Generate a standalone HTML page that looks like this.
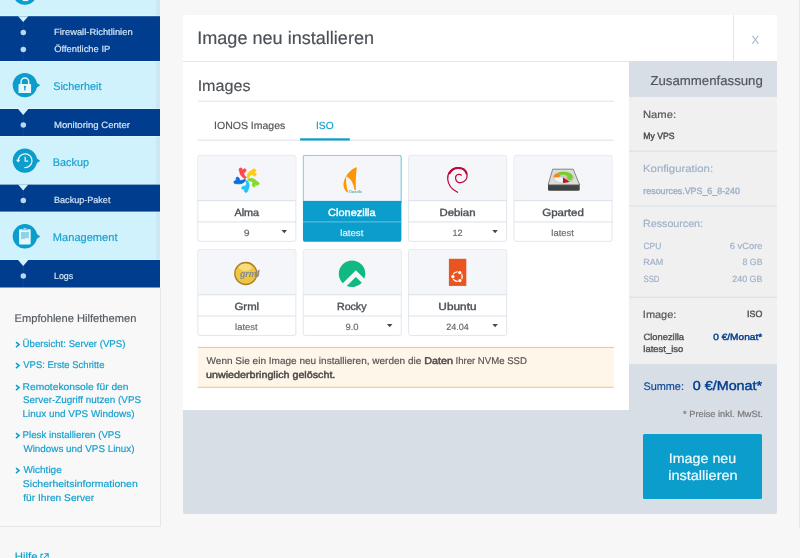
<!DOCTYPE html>
<html lang="de">
<head>
<meta charset="utf-8">
<title>Image neu installieren</title>
<style>
*{box-sizing:border-box;margin:0;padding:0}
html,body{width:800px;height:558px;overflow:hidden;background:#f7f7f7}
body{position:relative;font-family:"Liberation Sans",sans-serif;color:#4a4a4a}
.page{will-change:transform;position:absolute;left:0;top:0;width:800px;height:558px;overflow:hidden}
.t{-webkit-text-stroke:.18px;text-rendering:geometricPrecision;transform-origin:0 0;position:absolute;white-space:nowrap;line-height:1;font-weight:400;font-style:normal;text-decoration:none;display:block}
svg{position:absolute;display:block;overflow:visible}
.side{position:absolute;left:0;top:0;width:160px;height:558px}
.sidebg{left:0;top:0}
.help{position:absolute;left:0;top:288px;width:161px;height:239px;background:#f8f8f8;border-right:1px solid #e3e7eb;border-bottom:1px solid #e3e7eb}
.help .t,.help .chev{margin-top:-288px}
.chev{left:14.6px}
.ext{left:40px;top:552.5px}
.modal{position:absolute;left:0;top:0}
.mh{position:absolute;left:183px;top:15px;width:594px;height:47px;background:#fff;border-radius:2px 2px 0 0}
.content{position:absolute;left:183px;top:62px;width:446px;height:348px;background:#fff}
.foot{position:absolute;left:183px;top:410px;width:594px;height:104px;background:#d7dee6;border-radius:0 0 2px 2px}
.frames{left:0;top:0;pointer-events:none}
.sumh{position:absolute;left:629px;top:61px;width:148px;height:36px;background:#d7dee6}
.sumb{position:absolute;left:629px;top:97px;width:148px;height:267px;background:#f0f0f0}
.sums{position:absolute;left:629px;top:364px;width:148px;height:47px;background:#d7dee6}
.btn{position:absolute;left:643px;top:434px;width:119px;height:65px;background:#0b9dcc;border-radius:1.5px}
.edge{position:absolute;left:799px;top:0;width:1px;height:528px;background:#e5e8eb}

</style>
</head>
<body>
<div class="page">
<nav class="side">
<svg class="sidebg" width="160" height="288" viewBox="0 0 160 288" aria-hidden="true"><rect x="0" y="0" width="160" height="287.5" fill="#d0f2fc"/><rect x="156" y="0" width="4" height="287.5" fill="#cbe7f5"/><g transform="translate(0 -92.50)"><path d="M36.2 82.4l4 2.8-4 2.8z" fill="#0b9dcc"/><circle cx="24.9" cy="85.1" r="12.2" fill="#0b9dcc"/><rect x="22.7" y="80" width="5.5" height="13.6" fill="#e8f7fc"/></g><rect x="0" y="15.30" width="160" height="46.60" fill="#e9faff" opacity=".45"/><rect x="0" y="16.2" width="160" height="44.80" fill="#003d8f"/><path d="M18.1 16.2h10.2l-5.1 5.9z" fill="#d0f2fc"/><path d="M23.3 22.2V61.0" stroke="#2f62a8" stroke-width=".9" stroke-dasharray="1 1" opacity=".5"/><circle cx="23.3" cy="32.50" r="2.75" fill="#b9d8f0"/><circle cx="23.3" cy="49.50" r="2.75" fill="#b9d8f0"/><g transform="translate(0 0.00)"><path d="M36.2 82.4l4 2.8-4 2.8z" fill="#0b9dcc"/><circle cx="24.9" cy="85.1" r="12.2" fill="#0b9dcc"/><rect x="18.5" y="84" width="12.6" height="9.1" rx=".7" fill="#e8f7fc"/><path d="M21.1 84.3v-2.6a3.8 3.8 0 0 1 7.6 0v2.6" fill="none" stroke="#e8f7fc" stroke-width="1.45"/><circle cx="24.85" cy="86.9" r="1.05" fill="#0b9dcc"/><rect x="24.2" y="87.4" width="1.3" height="3.2" rx=".6" fill="#0b9dcc"/></g><rect x="0" y="108.10" width="160" height="28.80" fill="#e9faff" opacity=".45"/><rect x="0" y="109.0" width="160" height="27.00" fill="#003d8f"/><path d="M18.1 109.0h10.2l-5.1 5.9z" fill="#d0f2fc"/><path d="M23.3 115.0V136.0" stroke="#2f62a8" stroke-width=".9" stroke-dasharray="1 1" opacity=".5"/><circle cx="23.3" cy="125.00" r="2.75" fill="#b9d8f0"/><g transform="translate(0 75.50)"><path d="M36.2 82.4l4 2.8-4 2.8z" fill="#0b9dcc"/><circle cx="24.9" cy="85.1" r="12.2" fill="#0b9dcc"/><path d="M18.2 85.2a6.9 6.9 0 1 1 6.6 6.9" fill="none" stroke="#e8f7fc" stroke-width="1.25" stroke-linecap="round"/><path d="M16 84.2l2.2 2.9 2.2-2.9z" fill="#e8f7fc"/><path d="M25.2 81.3v4.4h3" fill="none" stroke="#e8f7fc" stroke-width="1.25"/></g><rect x="0" y="183.70" width="160" height="28.80" fill="#e9faff" opacity=".45"/><rect x="0" y="184.6" width="160" height="27.00" fill="#003d8f"/><path d="M18.1 184.6h10.2l-5.1 5.9z" fill="#d0f2fc"/><path d="M23.3 190.6V211.6" stroke="#2f62a8" stroke-width=".9" stroke-dasharray="1 1" opacity=".5"/><circle cx="23.3" cy="200.50" r="2.75" fill="#b9d8f0"/><g transform="translate(0 151.20)"><path d="M36.2 82.4l4 2.8-4 2.8z" fill="#0b9dcc"/><circle cx="24.9" cy="85.1" r="12.2" fill="#0b9dcc"/><rect x="19.1" y="78" width="11.6" height="15.2" rx=".8" fill="#e8f7fc"/><path d="M22.3 78.6l.9-1.5h1.1l.6-.9.6.9h1.1l.9 1.5z" fill="#e8f7fc" stroke="#0b9dcc" stroke-width=".5"/><rect x="21" y="80.8" width="7.9" height="6.1" fill="#8fd2ea"/><rect x="21" y="86.9" width="4" height="1" fill="#8fd2ea"/></g><rect x="0" y="259.10" width="160" height="29.30" fill="#e9faff" opacity=".45"/><rect x="0" y="260.0" width="160" height="27.50" fill="#003d8f"/><path d="M18.1 260.0h10.2l-5.1 5.9z" fill="#d0f2fc"/><path d="M23.3 266.0V287.5" stroke="#2f62a8" stroke-width=".9" stroke-dasharray="1 1" opacity=".5"/><circle cx="23.3" cy="276.10" r="2.75" fill="#b9d8f0"/></svg>
<a class="t" style="left:54px;top:28px;font-size:9.08px;transform:translateX(0.00px) scaleX(1.0318);color:#d3e6f6;">Firewall-Richtlinien</a>
<a class="t" style="left:54px;top:45px;font-size:9.08px;transform:translateX(0.18px) scaleX(1.0315);color:#d3e6f6;">Öffentliche IP</a>
<a class="t" style="left:53px;top:82px;font-size:11.03px;transform:translateX(0.20px) scaleX(0.9840);color:#19a2d0;">Sicherheit</a>
<a class="t" style="left:53px;top:121px;font-size:9.08px;transform:translateX(0.99px) scaleX(1.0530);color:#d3e6f6;">Monitoring Center</a>
<a class="t" style="left:52px;top:158px;font-size:11.03px;transform:translateX(0.87px) scaleX(0.9837);color:#19a2d0;">Backup</a>
<a class="t" style="left:54px;top:196px;font-size:9.08px;transform:translateX(0.02px) scaleX(0.9980);color:#d3e6f6;">Backup-Paket</a>
<a class="t" style="left:52px;top:233px;font-size:11.03px;transform:translateX(0.85px) scaleX(1.0050);color:#19a2d0;">Management</a>
<a class="t" style="left:54px;top:272px;font-size:9.08px;transform:translateX(0.04px) scaleX(0.9710);color:#d3e6f6;">Logs</a>
<section class="help">
<h3 class="t" style="left:14px;top:314px;font-size:11.03px;transform:translateX(0.55px) scaleX(1.0097);color:#555b60;">Empfohlene Hilfethemen</h3>
<svg class="chev" style="top:341.00px" width="6" height="7" viewBox="0 0 6 7" aria-hidden="true"><path d="M1 1.1l3.1 2.5L1 6.1" fill="none" stroke="#0b9dcc" stroke-width="1.45"/></svg>
<a class="t" style="left:22px;top:340px;font-size:9.73px;transform:translateX(0.56px) scaleX(0.9921);color:#15a0cf;">Übersicht: Server (VPS)</a>
<svg class="chev" style="top:362.25px" width="6" height="7" viewBox="0 0 6 7" aria-hidden="true"><path d="M1 1.1l3.1 2.5L1 6.1" fill="none" stroke="#0b9dcc" stroke-width="1.45"/></svg>
<a class="t" style="left:23px;top:361px;font-size:9.73px;transform:translateX(0.23px) scaleX(0.9765);color:#15a0cf;">VPS: Erste Schritte</a>
<svg class="chev" style="top:383.50px" width="6" height="7" viewBox="0 0 6 7" aria-hidden="true"><path d="M1 1.1l3.1 2.5L1 6.1" fill="none" stroke="#0b9dcc" stroke-width="1.45"/></svg>
<a class="t" style="left:22px;top:383px;font-size:9.73px;transform:translateX(0.52px) scaleX(1.0549);color:#15a0cf;">Remotekonsole für den</a>
<a class="t" style="left:22px;top:396px;font-size:9.73px;transform:translateX(0.88px) scaleX(1.0143);color:#15a0cf;">Server-Zugriff nutzen (VPS</a>
<a class="t" style="left:22px;top:410px;font-size:9.73px;transform:translateX(0.54px) scaleX(1.0211);color:#15a0cf;">Linux und VPS Windows)</a>
<svg class="chev" style="top:432.25px" width="6" height="7" viewBox="0 0 6 7" aria-hidden="true"><path d="M1 1.1l3.1 2.5L1 6.1" fill="none" stroke="#0b9dcc" stroke-width="1.45"/></svg>
<a class="t" style="left:22px;top:431px;font-size:9.73px;transform:translateX(0.56px) scaleX(0.9995);color:#15a0cf;">Plesk installieren (VPS</a>
<a class="t" style="left:23px;top:445px;font-size:9.73px;transform:translateX(0.39px) scaleX(1.0133);color:#15a0cf;">Windows und VPS Linux)</a>
<svg class="chev" style="top:467.25px" width="6" height="7" viewBox="0 0 6 7" aria-hidden="true"><path d="M1 1.1l3.1 2.5L1 6.1" fill="none" stroke="#0b9dcc" stroke-width="1.45"/></svg>
<a class="t" style="left:23px;top:466px;font-size:9.73px;transform:translateX(0.39px) scaleX(1.0294);color:#15a0cf;">Wichtige</a>
<a class="t" style="left:22px;top:480px;font-size:9.73px;transform:translateX(0.86px) scaleX(1.0736);color:#15a0cf;">Sicherheitsinformationen</a>
<a class="t" style="left:23px;top:494px;font-size:9.73px;transform:translateX(0.22px) scaleX(1.0513);color:#15a0cf;">für Ihren Server</a>
</section>
<div class="sideline"></div>
<a class="t" style="left:14px;top:552px;font-size:10.69px;transform:translateX(0.71px) scaleX(1.0654);color:#15a0cf;">Hilfe</a>
<svg class="ext" width="9" height="9" viewBox="0 0 9 9" aria-hidden="true"><path d="M3.3 1.2H1v6.8h6.8V5.6M4.6.8h3.6v3.6M8 1L4 5" fill="none" stroke="#0b9dcc" stroke-width="1.05"/></svg>
</nav>
<div class="edge"></div>
<main class="modal">
<header class="mh"></header><div class="content"></div><div class="foot"></div>
<aside class="sum"><div class="sumh"></div><div class="sumb"></div><div class="sums"></div><div class="btn"></div></aside>
<svg class="frames" width="800" height="558" viewBox="0 0 800 558" aria-hidden="true"><path d="M183 61.5H777M733.5 15V61.2" stroke="#d8e0e8" stroke-width=".8" fill="none"/><path d="M197.8 101.2H614M197.8 140.2H614" stroke="#d3dce5" stroke-width=".8" fill="none"/><rect x="300.1" y="138.3" width="49.7" height="2.2" fill="#0b9dcc"/><g transform="translate(197.85 155.35)"><rect x="0" y="0" width="98.0" height="86.0" rx="2" fill="#fff" stroke="#d6dee7" stroke-width=".75"/><path d="M.35 45.3V2A1.65 1.65 0 0 1 2 .35H96.0A1.65 1.65 0 0 1 97.65 2V45.3Z" fill="#f4f6f9"/><path d="M0 45.3H98.0M0 66.55H98.0" stroke="#d1dae4" stroke-width=".8"/><path d="M83.7 74.6h5.5l-2.75 3.2z" fill="#474747"/></g><g transform="translate(303.25 155.35)"><rect x="-.3" y="-.3" width="98.45" height="86.8" rx="2.2" fill="#0b9dcc"/><path d="M.1 45.8V1.9A1.8 1.8 0 0 1 1.9 .1H95.9A1.8 1.8 0 0 1 97.7 1.9V45.8Z" fill="#f4f6f9" stroke="#8fd3ea" stroke-width=".75"/><path d="M-.3 45.75H98.15V47.3H-.3Z" fill="#0b9dcc"/><path d="M-.3 66.55H98.15" stroke="#6fc4e2" stroke-width=".95"/></g><g transform="translate(408.65 155.35)"><rect x="0" y="0" width="98.0" height="86.0" rx="2" fill="#fff" stroke="#d6dee7" stroke-width=".75"/><path d="M.35 45.3V2A1.65 1.65 0 0 1 2 .35H96.0A1.65 1.65 0 0 1 97.65 2V45.3Z" fill="#f4f6f9"/><path d="M0 45.3H98.0M0 66.55H98.0" stroke="#d1dae4" stroke-width=".8"/><path d="M83.7 74.6h5.5l-2.75 3.2z" fill="#474747"/></g><g transform="translate(514.05 155.35)"><rect x="0" y="0" width="98.0" height="86.0" rx="2" fill="#fff" stroke="#d6dee7" stroke-width=".75"/><path d="M.35 45.3V2A1.65 1.65 0 0 1 2 .35H96.0A1.65 1.65 0 0 1 97.65 2V45.3Z" fill="#f4f6f9"/><path d="M0 45.3H98.0M0 66.55H98.0" stroke="#d1dae4" stroke-width=".8"/></g><g transform="translate(197.85 249.45)"><rect x="0" y="0" width="98.0" height="86.0" rx="2" fill="#fff" stroke="#d6dee7" stroke-width=".75"/><path d="M.35 45.3V2A1.65 1.65 0 0 1 2 .35H96.0A1.65 1.65 0 0 1 97.65 2V45.3Z" fill="#f4f6f9"/><path d="M0 45.3H98.0M0 66.55H98.0" stroke="#d1dae4" stroke-width=".8"/></g><g transform="translate(303.25 249.45)"><rect x="0" y="0" width="98.0" height="86.0" rx="2" fill="#fff" stroke="#d6dee7" stroke-width=".75"/><path d="M.35 45.3V2A1.65 1.65 0 0 1 2 .35H96.0A1.65 1.65 0 0 1 97.65 2V45.3Z" fill="#f4f6f9"/><path d="M0 45.3H98.0M0 66.55H98.0" stroke="#d1dae4" stroke-width=".8"/><path d="M83.7 74.6h5.5l-2.75 3.2z" fill="#474747"/></g><g transform="translate(408.65 249.45)"><rect x="0" y="0" width="98.0" height="86.0" rx="2" fill="#fff" stroke="#d6dee7" stroke-width=".75"/><path d="M.35 45.3V2A1.65 1.65 0 0 1 2 .35H96.0A1.65 1.65 0 0 1 97.65 2V45.3Z" fill="#f4f6f9"/><path d="M0 45.3H98.0M0 66.55H98.0" stroke="#d1dae4" stroke-width=".8"/><path d="M83.7 74.6h5.5l-2.75 3.2z" fill="#474747"/></g><rect x="197.8" y="347.4" width="416" height="39.9" fill="#fff6ea"/><path d="M197.8 347.4H613.8M197.8 387.3H613.8" stroke="#f9b65a" stroke-width=".85" fill="none"/><path d="M629 151.1H777M629 206H777M629 297.2H777" stroke="#d2dbe5" stroke-width=".8" fill="none"/></svg>
<svg class="logo" style="left:226px;top:160px" width="40" height="38" viewBox="0 0 40 38" role="img" aria-label="Alma"><g transform="translate(20.75 19.3) scale(.885)"><path transform="rotate(0)" fill="#ff4649" stroke="#ff4649" stroke-width=".9" stroke-linejoin="round" d="M-8.7 -10.9C-8.8 -13.3 -5.3 -13.5 -5 -11.1L-4.7 -9.7C-4.2 -10.2 -3.9 -11.9 -2.4 -11.9C-.7 -11.9 -.4 -9.7 -1.5 -8.6C-2.3 -7.8 -3.5 -7.5 -3.4 -6.5C-3.2 -4.8 -1.7 -3.3 -.5 -2.1L-1.5 -.8C-4.2 -1.500 -7.500 -4.300 -7.800 -7.900C-7.900 -9 -8.600 -9.800 -8.700 -10.900Z"/><path transform="rotate(72)" fill="#ffcb12" stroke="#ffcb12" stroke-width=".9" stroke-linejoin="round" d="M-8.7 -10.9C-8.8 -13.3 -5.3 -13.5 -5 -11.1L-4.7 -9.7C-4.2 -10.2 -3.9 -11.9 -2.4 -11.9C-.7 -11.9 -.4 -9.7 -1.5 -8.6C-2.3 -7.8 -3.5 -7.5 -3.4 -6.5C-3.2 -4.8 -1.7 -3.3 -.5 -2.1L-1.5 -.8C-4.2 -1.500 -7.500 -4.300 -7.800 -7.900C-7.900 -9 -8.600 -9.800 -8.700 -10.900Z"/><path transform="rotate(144)" fill="#86da2f" stroke="#86da2f" stroke-width=".9" stroke-linejoin="round" d="M-8.7 -10.9C-8.8 -13.3 -5.3 -13.5 -5 -11.1L-4.7 -9.7C-4.2 -10.2 -3.9 -11.9 -2.4 -11.9C-.7 -11.9 -.4 -9.7 -1.5 -8.6C-2.3 -7.8 -3.5 -7.5 -3.4 -6.5C-3.2 -4.8 -1.7 -3.3 -.5 -2.1L-1.5 -.8C-4.2 -1.500 -7.500 -4.300 -7.800 -7.900C-7.900 -9 -8.600 -9.800 -8.700 -10.900Z"/><path transform="rotate(216)" fill="#24c2ff" stroke="#24c2ff" stroke-width=".9" stroke-linejoin="round" d="M-8.7 -10.9C-8.8 -13.3 -5.3 -13.5 -5 -11.1L-4.7 -9.7C-4.2 -10.2 -3.9 -11.9 -2.4 -11.9C-.7 -11.9 -.4 -9.7 -1.5 -8.6C-2.3 -7.8 -3.5 -7.5 -3.4 -6.5C-3.2 -4.8 -1.7 -3.3 -.5 -2.1L-1.5 -.8C-4.2 -1.500 -7.500 -4.300 -7.800 -7.900C-7.900 -9 -8.600 -9.800 -8.700 -10.900Z"/><path transform="rotate(288)" fill="#0a6fdc" stroke="#0a6fdc" stroke-width=".9" stroke-linejoin="round" d="M-8.7 -10.9C-8.8 -13.3 -5.3 -13.5 -5 -11.1L-4.7 -9.7C-4.2 -10.2 -3.9 -11.9 -2.4 -11.9C-.7 -11.9 -.4 -9.7 -1.5 -8.6C-2.3 -7.8 -3.5 -7.5 -3.4 -6.5C-3.2 -4.8 -1.7 -3.3 -.5 -2.1L-1.5 -.8C-4.2 -1.500 -7.500 -4.300 -7.800 -7.900C-7.900 -9 -8.600 -9.800 -8.700 -10.900Z"/></g></svg>
<svg class="logo" style="left:332px;top:160px" width="40" height="38" viewBox="0 0 40 38" role="img" aria-label="Clonezilla"><path d="M24.87 7.16C20.4 8.2 13.6 13.6 11.6 22.5C10.9 27.3 12.9 30.7 15.3 32.4L16.4 32C14.7 29.3 14 22.5 14 16.4C17.7 17.4 21.8 22.5 22.5 30H23.9C23.5 22.5 23.9 13.6 24.87 7.16Z" fill="#ff9500"/><text x="16.9" y="32.5" font-family="Liberation Sans, sans-serif" font-size="3.1" font-weight="700" fill="#4da39a" textLength="12.8" lengthAdjust="spacingAndGlyphs">Clonezilla</text></svg>
<svg class="logo" style="left:437px;top:160px" width="40" height="38" viewBox="0 0 40 38" role="img" aria-label="Debian"><path d="M20.6 32.3C15.6 29.9 11.2 25 10.7 19.3C10.2 13.3 14.2 8.2 20 7.6C25.4 7.1 29.6 10.3 30.1 14.9C30.5 19.1 27.7 22.3 24 22.7C21.1 23 18.8 21.1 18.6 18.5C18.4 16.3 19.9 14.6 21.9 14.4C23 14.3 23.8 14.6 24.3 15.2" fill="none" stroke="#bf0637" stroke-width="1.25" stroke-linecap="round"/><path d="M12.6 13.3C14.4 9.9 17.6 8 21 7.9C25.3 7.8 28.6 10.2 29.6 13.6" fill="none" stroke="#bf0637" stroke-width="2" stroke-linecap="round"/></svg>
<svg class="logo" style="left:543px;top:160px" width="40" height="38" viewBox="0 0 40 38" role="img" aria-label="Gparted"><path d="M9.7 9.2H30.2L36.5 24.5H5.2Z" fill="#dcdcd9" stroke="#85857f" stroke-width="1" stroke-linejoin="round"/><path d="M5 24.3H36.7V29.3A1.5 1.5 0 0 1 35.2 30.8H6.5A1.5 1.5 0 0 1 5 29.3Z" fill="#3e4344"/><path d="M5.6 24.6H36.1" stroke="#bdbdb9" stroke-width=".8"/><ellipse cx="20.6" cy="17.6" rx="10.8" ry="5.8" fill="#c9c9c5"/><path d="M14 13.2C17 11.5 24 11.2 27.6 13.6C30.6 15.6 30.2 18.9 27.4 20.7L23.6 18.4C24.9 17.300 24.800 16.100 23.300 15.200C21.700 14.300 18.900 14.400 17.200 15.300Z" fill="#74d025"/><path d="M14 13.200L17.300 15.400L16.300 17.100H10.300C10.400 15.600 11.800 14.200 14 13.200Z" fill="#f8851a"/><path d="M20 17.600L26.400 21.500C24.600 22.500 22.300 22.900 20 22.900Z" fill="#cc0f1f"/><path d="M11 18.500C13.500 17.200 17 17.200 19.800 17.700L19.800 22.500C16 22.500 12.300 21.300 11 18.500Z" fill="#f3f3f1"/></svg>
<svg class="logo" style="left:226px;top:252px" width="40" height="38" viewBox="0 0 40 38" role="img" aria-label="Grml"><circle cx="19.800" cy="21.500" r="11" fill="#efc642" stroke="#a8802a" stroke-width="1.300"/><ellipse cx="19.300" cy="15.300" rx="6.500" ry="3.600" fill="#fdf0ae" opacity=".55"/><path d="M30.8 19.5L33.7 17.300L33.200 23.400L30.600 25.200Z" fill="#a9a9a9" opacity=".8"/><text x="13.9" y="24.7" font-family="Liberation Sans, sans-serif" font-size="9.4" font-weight="700" font-style="italic" fill="#858a8c" textLength="19.4" lengthAdjust="spacingAndGlyphs">grml</text></svg>
<svg class="logo" style="left:332px;top:252px" width="40" height="38" viewBox="0 0 40 38" role="img" aria-label="Rocky"><path d="M32.41 26.82A13.3 13.3 0 1 0 10.8 31.31L23.85 18.26Z" fill="#10b981"/><path d="M14.77 33.98A13.3 13.3 0 0 0 29.82 30.87L23.85 24.9Z" fill="#10b981"/></svg>
<svg class="logo" style="left:437px;top:252px" width="40" height="38" viewBox="0 0 40 38" role="img" aria-label="Ubuntu"><rect x="11.900" y="6.800" width="17.400" height="27.100" fill="#e95420"/><circle cx="20.500" cy="24.600" r="4.700" fill="none" stroke="#fff" stroke-width="1.350"/><g fill="#e95420"><circle cx="15.900" cy="24.600" r="2.350"/><circle cx="22.800" cy="20.600" r="2.350"/><circle cx="22.800" cy="28.600" r="2.350"/></g><g fill="#fff"><circle cx="15.900" cy="24.600" r="1.650"/><circle cx="22.800" cy="20.600" r="1.650"/><circle cx="22.800" cy="28.600" r="1.650"/></g></svg>
<h1 class="t" style="left:197px;top:29px;font-size:18.0px;transform:translateX(0.22px) scaleX(1.0040);color:#4a5159;">Image neu installieren</h1>
<a class="t" style="left:751px;top:35px;font-size:11.94px;transform:translateX(0.40px) scaleX(0.9760);color:#b3becc;">X</a>
<h2 class="t" style="left:197px;top:79px;font-size:15.6px;transform:translateX(0.64px) scaleX(1.0350);color:#4f5356;">Images</h2>
<a class="t" style="left:214px;top:122px;font-size:10.38px;transform:translateX(0.08px) scaleX(1.0119);color:#555;">IONOS Images</a>
<a class="t" style="left:316px;top:122px;font-size:10.38px;transform:translateX(0.00px) scaleX(0.9871);color:#12a0ce;">ISO</a>
<b class="t" style="left:234px;top:209px;font-size:10.38px;transform:translateX(0.41px) scaleX(1.0429);-webkit-text-stroke:0.4px;color:#4f5256;">Alma</b>
<span class="t" style="left:243px;top:229px;font-size:9.08px;transform:translateX(0.78px) scaleX(1.1503);color:#6a6a6a;">9</span>
<b class="t" style="left:328px;top:209px;font-size:10.38px;transform:translateX(0.08px) scaleX(1.0579);-webkit-text-stroke:0.4px;color:#fff;">Clonezilla</b>
<span class="t" style="left:340px;top:229px;font-size:9.08px;transform:translateX(0.29px) scaleX(1.0623);color:#e9f6fb;">latest</span>
<b class="t" style="left:439px;top:209px;font-size:10.38px;transform:translateX(0.40px) scaleX(1.0998);-webkit-text-stroke:0.4px;color:#4f5256;">Debian</b>
<span class="t" style="left:452px;top:229px;font-size:9.08px;transform:translateX(0.43px) scaleX(0.9913);color:#6a6a6a;">12</span>
<b class="t" style="left:542px;top:209px;font-size:10.38px;transform:translateX(0.24px) scaleX(1.1093);-webkit-text-stroke:0.4px;color:#4f5256;">Gparted</b>
<span class="t" style="left:551px;top:229px;font-size:9.08px;transform:translateX(0.30px) scaleX(1.0434);color:#6a6a6a;">latest</span>
<b class="t" style="left:234px;top:303px;font-size:10.38px;transform:translateX(0.55px) scaleX(1.0928);-webkit-text-stroke:0.4px;color:#4f5256;">Grml</b>
<span class="t" style="left:235px;top:323px;font-size:9.08px;transform:translateX(0.10px) scaleX(1.0434);color:#6a6a6a;">latest</span>
<b class="t" style="left:336px;top:303px;font-size:10.38px;transform:translateX(0.95px) scaleX(1.0246);-webkit-text-stroke:0.4px;color:#4f5256;">Rocky</b>
<span class="t" style="left:345px;top:323px;font-size:9.08px;transform:translateX(0.53px) scaleX(1.0322);color:#6a6a6a;">9.0</span>
<b class="t" style="left:438px;top:303px;font-size:10.38px;transform:translateX(0.33px) scaleX(1.1420);-webkit-text-stroke:0.4px;color:#4f5256;">Ubuntu</b>
<span class="t" style="left:446px;top:323px;font-size:9.08px;transform:translateX(0.14px) scaleX(0.9919);color:#6a6a6a;">24.04</span>
<span class="t" style="left:206px;top:357px;font-size:9.73px;transform:translateX(0.59px) scaleX(1.0305);color:#555;">Wenn Sie ein Image neu installieren, werden die</span>
<b class="t" style="left:424px;top:357px;font-size:9.73px;transform:translateX(0.33px) scaleX(1.1062);-webkit-text-stroke:0.45px;color:#4a4a4a;">Daten</b>
<span class="t" style="left:455px;top:357px;font-size:9.73px;transform:translateX(0.47px) scaleX(0.9867);color:#555;">Ihrer NVMe SSD</span>
<b class="t" style="left:206px;top:371px;font-size:9.73px;transform:translateX(0.01px) scaleX(1.1033);-webkit-text-stroke:0.45px;color:#4a4a4a;">unwiederbringlich gelöscht.</b>
<h3 class="t" style="left:650px;top:75px;font-size:12.97px;transform:translateX(0.45px) scaleX(1.0188);color:#50555a;">Zusammenfassung</h3>
<span class="t" style="left:642px;top:111px;font-size:10.38px;transform:translateX(1.00px) scaleX(1.0823);color:#555;">Name:</span>
<b class="t" style="left:643px;top:132px;font-size:9.08px;transform:translateX(0.36px) scaleX(0.9480);-webkit-text-stroke:0.4px;color:#4a4a4a;">My VPS</b>
<span class="t" style="left:642px;top:165px;font-size:10.38px;transform:translateX(0.99px) scaleX(1.0942);color:#9fb0c8;">Konfiguration:</span>
<b class="t" style="left:643px;top:187px;font-size:9.08px;transform:translateX(0.34px) scaleX(0.9762);-webkit-text-stroke:0.4px;color:#9fb0c8;">resources.VPS_6_8-240</b>
<span class="t" style="left:643px;top:220px;font-size:10.38px;transform:translateX(0.03px) scaleX(1.0303);color:#9fb0c8;">Ressourcen:</span>
<span class="t" style="left:643px;top:242px;font-size:9.08px;transform:translateX(0.42px) scaleX(0.9351);color:#9fb0c8;">CPU</span>
<span class="t" style="left:729px;top:242px;font-size:9.08px;transform:translateX(0.68px) scaleX(1.0318);color:#9fb0c8;">6 vCore</span>
<span class="t" style="left:643px;top:258px;font-size:9.08px;transform:translateX(0.23px) scaleX(0.9940);color:#9fb0c8;">RAM</span>
<span class="t" style="left:742px;top:258px;font-size:9.08px;transform:translateX(0.46px) scaleX(0.9694);color:#9fb0c8;">8 GB</span>
<span class="t" style="left:643px;top:275px;font-size:9.08px;transform:translateX(0.45px) scaleX(0.8573);color:#9fb0c8;">SSD</span>
<span class="t" style="left:732px;top:275px;font-size:9.08px;transform:translateX(0.20px) scaleX(0.9829);color:#9fb0c8;">240 GB</span>
<span class="t" style="left:642px;top:311px;font-size:10.38px;transform:translateX(0.84px) scaleX(1.0562);color:#555;">Image:</span>
<b class="t" style="left:747px;top:310px;font-size:9.08px;transform:translateX(0.08px) scaleX(0.9774);-webkit-text-stroke:0.4px;color:#4f4f4f;">ISO</b>
<b class="t" style="left:643px;top:333px;font-size:9.08px;transform:translateX(0.49px) scaleX(1.0297);-webkit-text-stroke:0.4px;color:#555;">Clonezilla</b>
<b class="t" style="left:643px;top:345px;font-size:9.08px;transform:translateX(0.31px) scaleX(1.0415);-webkit-text-stroke:0.4px;color:#555;">latest_iso</b>
<b class="t" style="left:713px;top:333px;font-size:9.08px;transform:translateX(0.25px) scaleX(1.1136);-webkit-text-stroke:0.4px;color:#003d8f;">0 €/Monat*</b>
<span class="t" style="left:643px;top:382px;font-size:11.0px;transform:translateX(0.39px) scaleX(0.9904);color:#0f4895;">Summe:</span>
<b class="t" style="left:692px;top:380px;font-size:12.97px;transform:translateX(0.77px) scaleX(1.1058);-webkit-text-stroke:0.4px;color:#003d8f;">0 €/Monat*</b>
<small class="t" style="left:683px;top:410px;font-size:9.08px;transform:translateX(0.02px) scaleX(1.0214);color:#777;">* Preise inkl. MwSt.</small>
<span class="t" style="left:668px;top:452px;font-size:13.6px;transform:translateX(0.74px) scaleX(1.0502);color:#f3fafd;">Image neu</span>
<span class="t" style="left:668px;top:469px;font-size:13.6px;transform:translateX(0.16px) scaleX(1.0691);color:#f3fafd;">installieren</span>
</main>
</div>
</body>
</html>
